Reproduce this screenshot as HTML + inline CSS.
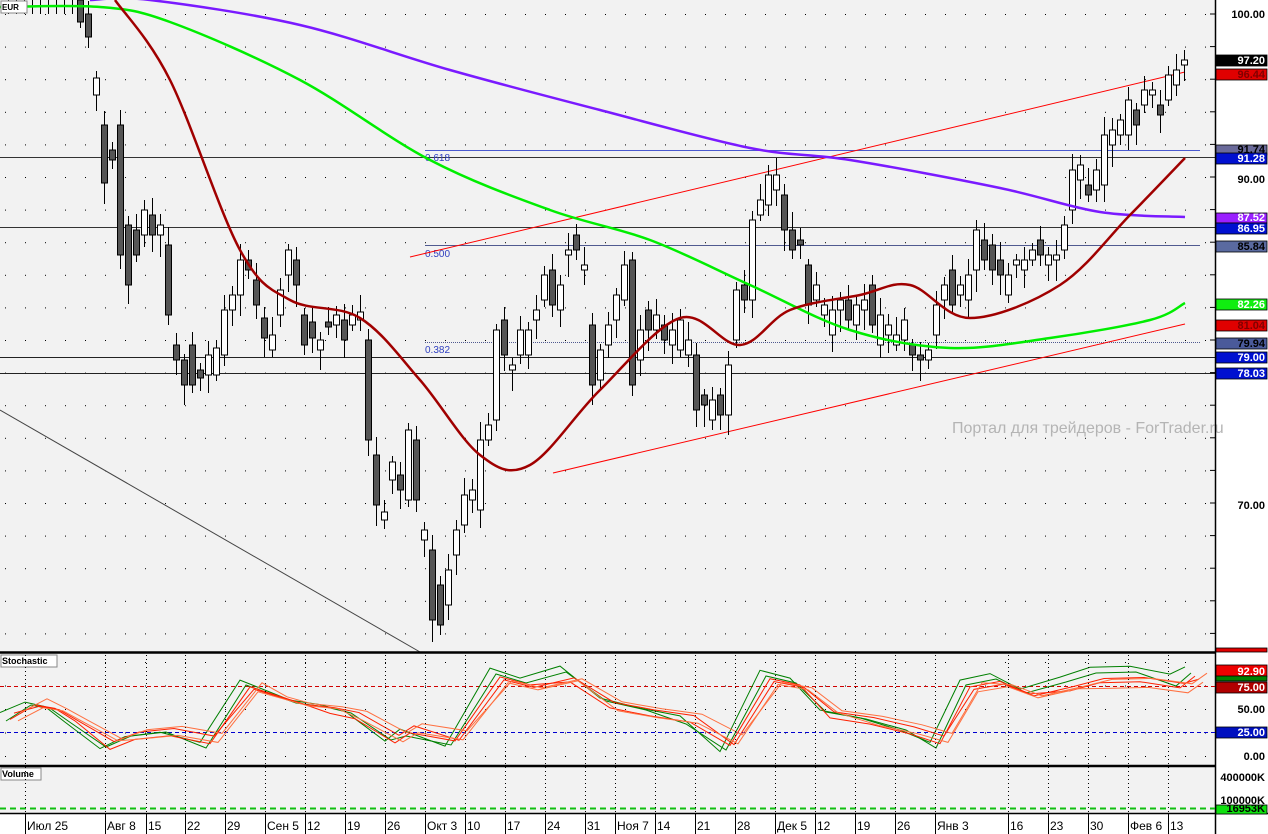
<!DOCTYPE html>
<html><head><meta charset="utf-8"><style>
body{margin:0;background:#fff;width:1268px;height:834px;overflow:hidden;font-family:"Liberation Sans",sans-serif}
svg{display:block}
</style></head><body>
<svg id="s" width="1268" height="834" xmlns="http://www.w3.org/2000/svg" font-family="Liberation Sans, sans-serif">
<defs>
<pattern id="dots" x="25" y="14" width="40" height="32.6" patternUnits="userSpaceOnUse"><rect x="0" y="0" width="1" height="1" fill="#000"/><rect x="20" y="0" width="1" height="1" fill="#000"/></pattern>
<pattern id="dots2" x="25" y="662" width="20" height="23.5" patternUnits="userSpaceOnUse"><rect width="1" height="1" fill="#000"/></pattern>
</defs>
<rect x="0" y="0" width="1215" height="813" fill="#f2f2f2"/>
<rect x="1216" y="0" width="52" height="834" fill="#fff"/>
<rect x="0" y="0" width="1215" height="652" fill="url(#dots)"/>
<rect x="0" y="655" width="1215" height="110" fill="url(#dots2)"/>
<g id="g"></g>
</svg>
<script>
var g=document.getElementById('g'),h='';
function L(x1,y1,x2,y2,c,w,d){h+='<line x1="'+x1+'" y1="'+y1+'" x2="'+x2+'" y2="'+y2+'" stroke="'+c+'" stroke-width="'+(w||1)+'"'+(d?' stroke-dasharray="'+d+'"':'')+'/>';}
function P(pts,c,w){h+='<polyline fill="none" stroke="'+c+'" stroke-width="'+w+'" points="'+pts.map(function(p){return p.join(',')}).join(' ')+'"/>';}
function S(p,c,w){var d='M'+p[0][0]+','+p[0][1];for(var i=0;i<p.length-1;i++){var p0=p[i-1]||p[i],p1=p[i],p2=p[i+1],p3=p[i+2]||p2;
 d+=' C'+(p1[0]+(p2[0]-p0[0])/6)+','+(p1[1]+(p2[1]-p0[1])/6)+' '+(p2[0]-(p3[0]-p1[0])/6)+','+(p2[1]-(p3[1]-p1[1])/6)+' '+p2[0]+','+p2[1];}
 h+='<path fill="none" stroke="'+c+'" stroke-width="'+w+'" d="'+d+'"/>';}
function T(x,y,t,s,c,a,wt){h+='<text x="'+x+'" y="'+y+'" font-size="'+s+'" fill="'+c+'"'+(a?' text-anchor="'+a+'"':'')+(wt?' font-weight="bold"':'')+'>'+t+'</text>';}
[[157,'#333'],[227,'#333'],[357,'#222'],[373,'#222']].forEach(function(a){L(0,a[0]+.5,1215,a[0]+.5,a[1],1)});
L(425,150.5,1200,150.5,'#4a5ad0',1);L(425,245.5,1200,245.5,'#505a90',1);L(425,342.5,1200,342.5,'#505a90',1,'1,1');
T(425,161,'0.618',10,'#3040c0');T(425,257,'0.500',10,'#3040c0');T(425,353,'0.382',10,'#3040c0');
L(0,410,420,652,'#444',1);
L(410,257,1185,72,'#f00',1);L(553,473,1185,324,'#f00',1);
var c=[[0,22,1],[14,37,1],[78,95,0],[125,183,1],[150,160,1],[125,255,1],[225,285,1],[230,255,1],[210,235,0],[215,235,1],[225,235,0],[245,315,1],[345,360,1],[360,385,1],[345,385,1],[370,378,1],[355,375,0],[348,375,0],[310,355,0],[295,310,0],[260,295,0],[260,270,1],[280,305,1],[318,338,1],[335,350,0],[290,315,0],[250,275,0],[260,285,1],[315,345,1],[322,338,1],[340,350,0],[322,327,1],[315,325,0],[320,340,1],[315,325,0],[312,320,0],[340,440,1],[455,505,1],[512,520,0],[462,480,0],[475,490,1],[430,500,0],[440,500,1],[530,540,0],[550,620,1],[585,625,1],[570,605,0],[530,555,0],[495,525,0],[490,500,0],[440,510,0],[425,440,0],[330,420,0],[320,355,1],[365,370,0],[330,355,0],[330,355,0],[310,320,0],[275,300,0],[270,305,1],[285,310,0],[250,255,0],[235,250,1],[265,270,0],[325,385,1],[350,380,0],[325,345,0],[295,320,0],[265,300,0],[260,385,1],[330,360,0],[310,330,1],[315,330,0],[325,340,1],[330,345,0],[320,350,0],[340,355,0],[355,410,1],[395,405,1],[400,420,0],[395,415,1],[365,415,0],[290,340,0],[285,300,1],[220,300,0],[200,215,0],[175,205,0],[175,190,0],[195,230,1],[230,250,1],[240,245,1],[265,305,1],[285,300,0],[305,315,0],[310,335,0],[300,310,0],[300,320,1],[305,325,0],[300,310,0],[285,325,1],[315,345,0],[325,335,0],[335,345,0],[320,340,0],[345,355,1],[355,360,1],[350,360,0],[305,335,0],[285,300,0],[270,305,1],[285,295,0],[275,300,0],[230,270,0],[240,260,1],[245,270,1],[260,275,1],[275,295,0],[260,265,0],[260,270,0],[250,260,0],[240,255,1],[255,265,0],[255,260,0],[225,250,0],[170,210,0],[165,180,0],[185,195,1],[170,190,0],[135,185,0],[130,145,0],[120,135,0],[100,135,0],[110,125,1],[90,105,0],[90,95,0],[105,115,1],[75,100,0],[70,85,0],[60,65,0]];
for(var i=0;i<c.length;i++){var x=80+8*i,a=c[i],hi=a[0]-6-(i*7%13),lo=a[1]+6+(i*5%17);
 L(x+.5,hi,x+.5,lo,'#000',1);
 h+='<rect x="'+(x-2.5)+'" y="'+a[0]+'" width="6" height="'+Math.max(2,a[1]-a[0])+'" fill="'+(a[2]?'#555':'#fff')+'" stroke="#000" stroke-width="1"/>';}
for(var x=8;x<76;x+=8){L(x+.5,0,x+.5,14,'#000');}
S([[90,0],[150,0],[300,25],[450,70],[600,110],[750,148],[850,160],[1000,188],[1100,212],[1185,217]],'#7a1aff',2.5);
S([[0,7],[100,7],[170,22],[300,80],[430,160],[550,210],[650,240],[750,285],[850,330],[950,348],[1050,338],[1150,320],[1185,303]],'#00ee00',2.5);
S([[115,0],[170,80],[240,250],[290,300],[360,318],[420,380],[480,455],[530,465],[600,390],[680,318],[740,345],[790,310],[860,295],[910,285],[970,318],[1060,285],[1130,215],[1185,158]],'#a00000',2.5);
T(952,433,'Портал для трейдеров - ForTrader.ru',16,'#b4b4b4');
L(0,652.5,1215,652.5,'#000',2.5);L(0,766,1215,766,'#000',2.5);L(0,813.5,1268,813.5,'#000',1.5);
L(1215.5,0,1215.5,834,'#000',1.5);
h+='<rect x="1" y="1" width="26" height="12" fill="#fff" stroke="#888"/>';T(2,10,'EUR',8,'#000',0,1);
h+='<rect x="1" y="655" width="56" height="12" fill="#fff" stroke="#888"/>';T(2,664,'Stochastic',9,'#000',0,1);
h+='<rect x="1" y="768" width="40" height="12" fill="#fff" stroke="#888"/>';T(2,777,'Volume',9,'#000',0,1);
L(0,686.5,1215,686.5,'#d00000',1,'4,3');L(0,732.5,1215,732.5,'#0000d0',1,'4,3');
var kx=[0,25,45,65,100,125,160,200,240,265,290,320,345,385,400,445,490,520,560,600,640,680,720,760,790,820,860,900,930,960,990,1020,1060,1090,1130,1170,1185];
var ky=[715,700,705,720,745,735,732,742,680,690,700,705,712,740,730,740,670,680,670,700,710,718,745,672,680,710,718,730,742,680,675,690,680,672,672,680,668];
function stoch(off,sh,col,sc){var p=[];for(var i=0;i<kx.length;i++){var y=709+(ky[i]-709)*sc+off+((i*13+sh)%7)-3;p.push([kx[i]+sh,Math.max(663,Math.min(752,y))]);}P(p,col,1);}
stoch(0,0,'#008000',1.1);stoch(3,6,'#008000',1.0);stoch(5,10,'#ff2000',0.9);stoch(2,14,'#ff2000',0.85);stoch(6,18,'#ff7040',0.8);stoch(0,22,'#ff7040',0.8);
L(0,808.5,1215,808.5,'#10c010',2,'6,4');
var d=[[27,'Июл 25'],[107,'Авг 8'],[148,'15'],[187,'22'],[227,'29'],[267,'Сен 5'],[307,'12'],[347,'19'],[387,'26'],[427,'Окт 3'],[467,'10'],[507,'17'],[547,'24'],[587,'31'],[617,'Ноя 7'],[657,'14'],[697,'21'],[737,'28'],[777,'Дек 5'],[817,'12'],[857,'19'],[897,'26'],[937,'Янв 3'],[1010,'16'],[1050,'23'],[1090,'30'],[1130,'Фев 6'],[1170,'13']];
d.forEach(function(a){L(a[0]-1.5,814,a[0]-1.5,834,'#000');L(a[0]-1.5,655,a[0]-1.5,812,'#000',1,'1,3');T(a[0],830,a[1],12,'#000');});
function B(y,hh,bg,t,col){h+='<rect x="1216" y="'+y+'" width="51" height="'+hh+'" fill="'+bg+'" stroke="#000" stroke-width="0.8"/>';T(1265,y+hh-2,t,11,col,'end',1);}
[[14,'100.00'],[179,'90.00'],[505,'70.00'],[709,'50.00'],[756,'0.00'],[777,'400000K']].forEach(function(a){T(1265,a[0]+4,a[1],11,'#000','end',1);});
for(var y=14;y<650;y+=32.6){L(1210,y,1215,y,'#000');}
B(55,11,'#000','97.20','#fff');B(69,11,'#e00000','96.44','#800000');B(145,10,'#6a6a9a','91.74','#000');B(153,11,'#0010d0','91.28','#fff');
B(213,10,'#9a20ff','87.52','#fff');B(223,11,'#0010d0','86.95','#fff');B(241,11,'#5a6aa0','85.84','#000');B(299,11,'#10ee10','82.26','#fff');
B(320,11,'#e00000','81.04','#800000');B(338,11,'#4a5a9a','79.94','#000');B(352,11,'#0010d0','79.00','#fff');B(368,11,'#0010d0','78.03','#fff');
B(648,4,'#e00000','','#fff');B(665,12,'#ee0000','92.90','#fff');B(676,5,'#008000','','#fff');B(682,11,'#b00000','75.00','#fff');B(727,11,'#0010c0','25.00','#fff');
T(1265,804,'100000K',11,'#000','end',1);B(805,9,'#10e010','16953K','#000');
g.innerHTML=h;
</script>
</body></html>
